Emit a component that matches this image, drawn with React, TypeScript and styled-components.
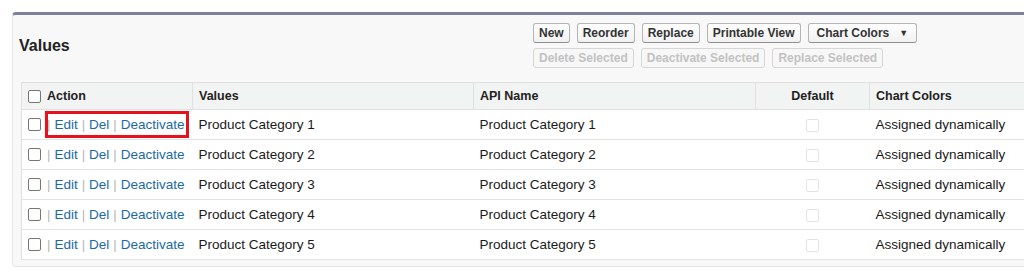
import * as React from "react";
import styled, { createGlobalStyle } from "styled-components";

const GlobalStyle = createGlobalStyle`
  body {
    margin: 0;
    background: #ffffff;
    font-family: "Liberation Sans", Arial, sans-serif;
    overflow: hidden;
  }
`;

type Row = { label: string; api: string };

const rows: Row[] = [1, 2, 3, 4, 5].map((n) => ({
  label: `Product Category ${n}`,
  api: `Product Category ${n}`,
}));

const colWidths = [171, 281, 282, 114, 180];

function App() {
  return (
    <>
      <GlobalStyle />
      <Page>
        <Panel>
          <PanelHeader>
            <Title>Values</Title>
            <ButtonArea>
              <ButtonRow>
                <Btn>New</Btn>
                <Btn>Reorder</Btn>
                <Btn>Replace</Btn>
                <Btn>Printable View</Btn>
                <Btn $wide>
                  Chart Colors <Caret>▼</Caret>
                </Btn>
              </ButtonRow>
              <ButtonRow>
                <Btn disabled>Delete Selected</Btn>
                <Btn disabled>Deactivate Selected</Btn>
                <Btn disabled>Replace Selected</Btn>
              </ButtonRow>
            </ButtonArea>
          </PanelHeader>
          <Table>
            <colgroup>
              {colWidths.map((w, i) => (
                <col key={i} style={{ width: w }} />
              ))}
            </colgroup>
            <thead>
              <tr>
                <Th>
                  <ActionCell>
                    <Check />
                    Action
                  </ActionCell>
                </Th>
                <Th>Values</Th>
                <Th>API Name</Th>
                <Th $center>Default</Th>
                <Th>Chart Colors</Th>
              </tr>
            </thead>
            <tbody>
              {rows.map((r, i) => (
                <tr key={i}>
                  <Td>
                    <ActionCell>
                      <Check />
                      <Links>
                        <Sep>|</Sep>
                        <Link>Edit</Link>
                        <Sep>|</Sep>
                        <Link>Del</Link>
                        <Sep>|</Sep>
                        <Link>Deactivate</Link>
                        {i === 0 && <Highlight />}
                      </Links>
                    </ActionCell>
                  </Td>
                  <Td>{r.label}</Td>
                  <Td>{r.api}</Td>
                  <Td $center>
                    <DisabledCheck />
                  </Td>
                  <Td>Assigned dynamically</Td>
                </tr>
              ))}
            </tbody>
          </Table>
        </Panel>
      </Page>
    </>
  );
}

export default App;

const Page = styled.div`
  padding: 12px 0 0 12px;
  width: 1024px;
  box-sizing: border-box;
  overflow: hidden;
`;

const Panel = styled.div`
  width: 1060px;
  background: #f8f8f8;
  border: 1px solid #e4e5e7;
  border-top: 3px solid #7d8499;
  border-radius: 4px;
  padding: 0 0 6px 8px;
  box-sizing: border-box;
`;

const PanelHeader = styled.div`
  display: flex;
  height: 67px;
  padding-top: 8px;
  box-sizing: border-box;
`;

const Title = styled.h2`
  margin: 0;
  width: 514px;
  margin-left: -2px;
  font-size: 16px;
  font-weight: bold;
  color: #222;
  line-height: 1;
  padding-top: 15px;
`;

const ButtonArea = styled.div`
  display: flex;
  flex-direction: column;
  gap: 5px;
`;

const ButtonRow = styled.div`
  display: flex;
  gap: 7px;
`;

const Btn = styled.button<{ $wide?: boolean }>`
  height: 20px;
  padding: 0 ${(p) => (p.$wide ? "8px" : "5px")};
  font-family: "Liberation Sans", Arial, sans-serif;
  font-size: 12px;
  font-weight: bold;
  color: #333;
  background: linear-gradient(#ffffff, #f1f1f1);
  border: 1px solid #b5b5b5;
  border-bottom-color: #8f8f8f;
  border-radius: 3px;
  line-height: 18px;
  display: flex;
  align-items: center;
  gap: 10px;

  &:disabled {
    color: #c2c2c2;
    border-color: #d6d6d6;
    background: #f7f7f7;
  }
`;

const Caret = styled.span`
  font-size: 9px;
  color: #333;
`;

const Table = styled.table`
  border-collapse: collapse;
  table-layout: fixed;
  background: #ffffff;
  border: 1px solid #e0e0e0;
  width: 1028px;
`;

const Th = styled.th<{ $center?: boolean }>`
  height: 26px;
  background: #f2f3f3;
  border-bottom: 1px solid #e0e0e0;
  border-right: 1px solid #e0e0e0;
  text-align: ${(p) => (p.$center ? "center" : "left")};
  padding: 0 6px;
  font-size: 12.5px;
  font-weight: bold;
  color: #222;
`;

const Td = styled.td<{ $center?: boolean }>`
  height: 29px;
  border-bottom: 1px solid #e3e3e3;
  padding: 0 6px;
  font-size: 13.5px;
  color: #1a1a1a;
  text-align: ${(p) => (p.$center ? "center" : "left")};
  white-space: nowrap;
`;

const ActionCell = styled.div`
  display: flex;
  align-items: center;
  gap: 6px;
`;

const Check = styled.span`
  display: inline-block;
  width: 13px;
  height: 13px;
  border: 1px solid #767676;
  border-radius: 2px;
  background: #fff;
  box-sizing: border-box;
`;

const DisabledCheck = styled(Check)`
  border-color: #e4e4e4;
  vertical-align: middle;
`;

const Links = styled.span`
  position: relative;
  display: inline-flex;
  align-items: center;
  gap: 4px;
`;

const Link = styled.a`
  color: #1b6aa5;
  font-size: 13.5px;
  text-decoration: none;
`;

const Sep = styled.span`
  color: #b5b5b5;
  font-size: 13px;
`;

const Highlight = styled.span`
  position: absolute;
  left: -2px;
  right: -4px;
  top: -6px;
  bottom: -6px;
  border: 3px solid #e8101a;
  pointer-events: none;
`;
